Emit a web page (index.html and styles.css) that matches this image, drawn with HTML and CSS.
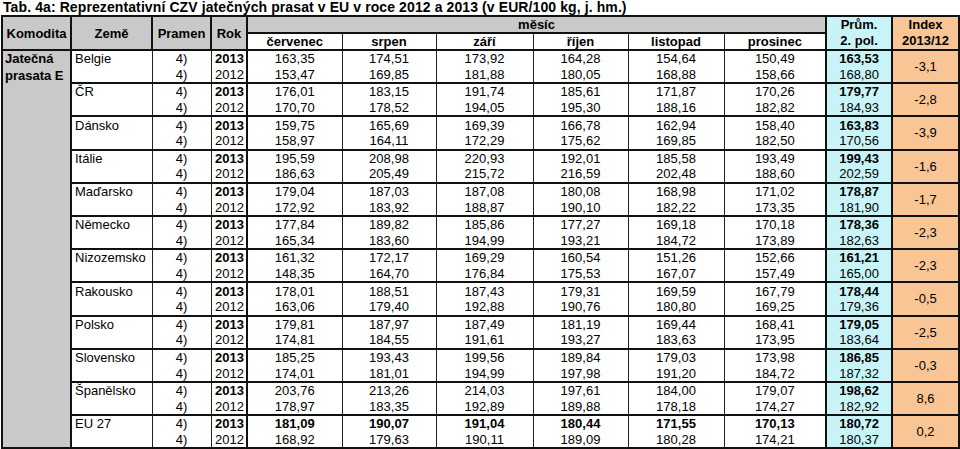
FILE: index.html
```html
<!DOCTYPE html>
<html lang="cs">
<head>
<meta charset="utf-8">
<title>Tab. 4a</title>
<link rel="stylesheet" href="styles.css">
</head>
<body>
<div class="title">Tab. 4a: Reprezentativní CZV jatečných prasat v EU v roce 2012 a 2013 (v EUR/100 kg, j. hm.)</div>
<table class="tab">
<colgroup>
<col class="c-kom"><col class="c-zeme"><col class="c-src"><col class="c-rok">
<col class="c-m1"><col class="c-m2"><col class="c-m3"><col class="c-m4"><col class="c-m5"><col class="c-m6">
<col class="c-pr"><col class="c-ix">
</colgroup>
<thead>
<tr class="h1">
<th rowspan="2">Komodita</th><th rowspan="2">Země</th><th rowspan="2">Pramen</th><th rowspan="2" class="rok">Rok</th>
<th colspan="6" class="mes">měsíc</th>
<th rowspan="2" class="pr">Prům.<br>2. pol.</th>
<th rowspan="2" class="ix">Index<br>2013/12</th>
</tr>
<tr class="h2">
<th>červenec</th><th>srpen</th><th>září</th><th>říjen</th><th>listopad</th><th class="last">prosinec</th>
</tr>
</thead>
<tbody>
<tr class="g"><td class="kom" rowspan="24">Jatečná<br>prasata E</td><td class="zeme">Belgie</td><td class="src">4)</td><td class="rok b">2013</td><td>163,35</td><td>174,51</td><td>173,92</td><td>164,28</td><td>154,64</td><td class="last">150,49</td><td class="pc b">163,53</td><td class="ix" rowspan="2">-3,1</td></tr>
<tr><td class="zeme"></td><td class="src">4)</td><td class="rok">2012</td><td>153,47</td><td>169,85</td><td>181,88</td><td>180,05</td><td>168,88</td><td class="last">158,66</td><td class="pc">168,80</td></tr>

<tr class="g"><td class="zeme">ČR</td><td class="src">4)</td><td class="rok b">2013</td><td>176,01</td><td>183,15</td><td>191,74</td><td>185,61</td><td>171,87</td><td class="last">170,26</td><td class="pc b">179,77</td><td class="ix" rowspan="2">-2,8</td></tr>
<tr><td class="zeme"></td><td class="src">4)</td><td class="rok">2012</td><td>170,70</td><td>178,52</td><td>194,05</td><td>195,30</td><td>188,16</td><td class="last">182,82</td><td class="pc">184,93</td></tr>

<tr class="g"><td class="zeme">Dánsko</td><td class="src">4)</td><td class="rok b">2013</td><td>159,75</td><td>165,69</td><td>169,39</td><td>166,78</td><td>162,94</td><td class="last">158,40</td><td class="pc b">163,83</td><td class="ix" rowspan="2">-3,9</td></tr>
<tr><td class="zeme"></td><td class="src">4)</td><td class="rok">2012</td><td>158,97</td><td>164,11</td><td>172,29</td><td>175,62</td><td>169,85</td><td class="last">182,50</td><td class="pc">170,56</td></tr>

<tr class="g"><td class="zeme">Itálie</td><td class="src">4)</td><td class="rok b">2013</td><td>195,59</td><td>208,98</td><td>220,93</td><td>192,01</td><td>185,58</td><td class="last">193,49</td><td class="pc b">199,43</td><td class="ix" rowspan="2">-1,6</td></tr>
<tr><td class="zeme"></td><td class="src">4)</td><td class="rok">2012</td><td>186,63</td><td>205,49</td><td>215,72</td><td>216,59</td><td>202,48</td><td class="last">188,60</td><td class="pc">202,59</td></tr>

<tr class="g"><td class="zeme">Maďarsko</td><td class="src">4)</td><td class="rok b">2013</td><td>179,04</td><td>187,03</td><td>187,08</td><td>180,08</td><td>168,98</td><td class="last">171,02</td><td class="pc b">178,87</td><td class="ix" rowspan="2">-1,7</td></tr>
<tr><td class="zeme"></td><td class="src">4)</td><td class="rok">2012</td><td>172,92</td><td>183,92</td><td>188,87</td><td>190,10</td><td>182,22</td><td class="last">173,35</td><td class="pc">181,90</td></tr>

<tr class="g"><td class="zeme">Německo</td><td class="src">4)</td><td class="rok b">2013</td><td>177,84</td><td>189,82</td><td>185,86</td><td>177,27</td><td>169,18</td><td class="last">170,18</td><td class="pc b">178,36</td><td class="ix" rowspan="2">-2,3</td></tr>
<tr><td class="zeme"></td><td class="src">4)</td><td class="rok">2012</td><td>165,34</td><td>183,60</td><td>194,99</td><td>193,21</td><td>184,72</td><td class="last">173,89</td><td class="pc">182,63</td></tr>

<tr class="g"><td class="zeme">Nizozemsko</td><td class="src">4)</td><td class="rok b">2013</td><td>161,32</td><td>172,17</td><td>169,29</td><td>160,54</td><td>151,26</td><td class="last">152,66</td><td class="pc b">161,21</td><td class="ix" rowspan="2">-2,3</td></tr>
<tr><td class="zeme"></td><td class="src">4)</td><td class="rok">2012</td><td>148,35</td><td>164,70</td><td>176,84</td><td>175,53</td><td>167,07</td><td class="last">157,49</td><td class="pc">165,00</td></tr>

<tr class="g"><td class="zeme">Rakousko</td><td class="src">4)</td><td class="rok b">2013</td><td>178,01</td><td>188,51</td><td>187,43</td><td>179,31</td><td>169,59</td><td class="last">167,79</td><td class="pc b">178,44</td><td class="ix" rowspan="2">-0,5</td></tr>
<tr><td class="zeme"></td><td class="src">4)</td><td class="rok">2012</td><td>163,06</td><td>179,40</td><td>192,88</td><td>190,76</td><td>180,80</td><td class="last">169,25</td><td class="pc">179,36</td></tr>

<tr class="g"><td class="zeme">Polsko</td><td class="src">4)</td><td class="rok b">2013</td><td>179,81</td><td>187,97</td><td>187,49</td><td>181,19</td><td>169,44</td><td class="last">168,41</td><td class="pc b">179,05</td><td class="ix" rowspan="2">-2,5</td></tr>
<tr><td class="zeme"></td><td class="src">4)</td><td class="rok">2012</td><td>174,81</td><td>184,55</td><td>191,61</td><td>193,27</td><td>183,63</td><td class="last">173,95</td><td class="pc">183,64</td></tr>

<tr class="g"><td class="zeme">Slovensko</td><td class="src">4)</td><td class="rok b">2013</td><td>185,25</td><td>193,43</td><td>199,56</td><td>189,84</td><td>179,03</td><td class="last">173,98</td><td class="pc b">186,85</td><td class="ix" rowspan="2">-0,3</td></tr>
<tr><td class="zeme"></td><td class="src">4)</td><td class="rok">2012</td><td>174,01</td><td>181,01</td><td>194,99</td><td>197,98</td><td>191,20</td><td class="last">184,72</td><td class="pc">187,32</td></tr>

<tr class="g"><td class="zeme">Španělsko</td><td class="src">4)</td><td class="rok b">2013</td><td>203,76</td><td>213,26</td><td>214,03</td><td>197,61</td><td>184,00</td><td class="last">179,07</td><td class="pc b">198,62</td><td class="ix" rowspan="2">8,6</td></tr>
<tr><td class="zeme"></td><td class="src">4)</td><td class="rok">2012</td><td>178,97</td><td>183,35</td><td>192,89</td><td>189,88</td><td>178,18</td><td class="last">174,27</td><td class="pc">182,92</td></tr>

<tr class="g"><td class="zeme">EU 27</td><td class="src">4)</td><td class="rok b">2013</td><td class="b">181,09</td><td class="b">190,07</td><td class="b">191,04</td><td class="b">180,44</td><td class="b">171,55</td><td class="last b">170,13</td><td class="pc b">180,72</td><td class="ix" rowspan="2">0,2</td></tr>
<tr><td class="zeme"></td><td class="src">4)</td><td class="rok">2012</td><td>168,92</td><td>179,63</td><td>190,11</td><td>189,09</td><td>180,28</td><td class="last">174,21</td><td class="pc">180,37</td></tr>
</tbody>
</table>
</body>
</html>
```

FILE: styles.css
```css
html, body {
  margin: 0;
  padding: 0;
  background: #fff;
}

body {
  font-family: "Liberation Sans", Arial, sans-serif;
  color: #000;
}

.title {
  font-size: 14px;
  font-weight: bold;
  line-height: 15px;
  height: 15px;
  padding-left: 3px;
  letter-spacing: 0.1px;
  white-space: nowrap;
}

.tab {
  border-collapse: collapse;
  table-layout: fixed;
  width: 958px;
  margin-left: 1px;
  font-size: 13px;
  border: 2px solid #111;
}

.c-kom { width: 69px; }
.c-zeme { width: 81px; }
.c-src { width: 59px; }
.c-rok { width: 36px; }
.c-m1 { width: 95px; }
.c-m2 { width: 94px; }
.c-m3 { width: 97px; }
.c-m4 { width: 95px; }
.c-m5 { width: 96px; }
.c-m6 { width: 102px; }
.c-pr { width: 66px; }
.c-ix { width: 67px; }

.tab th,
.tab td {
  padding: 0;
  line-height: 15px;
  white-space: nowrap;
  overflow: hidden;
  border-left: 1px solid #222;
  border-right: 1px solid #222;
  text-align: center;
  vertical-align: middle;
}

.tab th {
  font-weight: bold;
  background: #c9c9c9;
  border: 2px solid #111;
}

.h1 { height: 17px; }
.h2 { height: 16px; }

.tab .h2 th {
  background: #fff;
  border-left: 1px solid #222;
  border-right: 1px solid #222;
  border-top: 2px solid #111;
  border-bottom: 2px solid #111;
}

.tab .h2 th.last { border-right: 2px solid #111; }

.tab th.pr {
  background: #c9f4f7;
  line-height: 16px;
}

.tab th.ix {
  background: #f9c594;
  line-height: 16px;
}

.tab tbody tr { height: 16.6px; }

.tab tr.g td { border-top: 2px solid #111; }

.tab td.kom {
  background: #c9c9c9;
  font-weight: bold;
  text-align: left;
  vertical-align: top;
  padding-left: 2px;
  line-height: 16.6px;
  border-right: 2px solid #111;
  white-space: normal;
}

.tab td.zeme {
  text-align: left;
  padding-left: 3px;
}

.tab td.rok {
  text-align: right;
  padding-right: 2px;
  border-right: 2px solid #111;
}

.tab td.last { border-right: 2px solid #111; }

.tab td.pc {
  background: #c9f4f7;
  border-right: 2px solid #111;
}

.tab td.ix {
  background: #f9c594;
}

.b { font-weight: bold; }
```
